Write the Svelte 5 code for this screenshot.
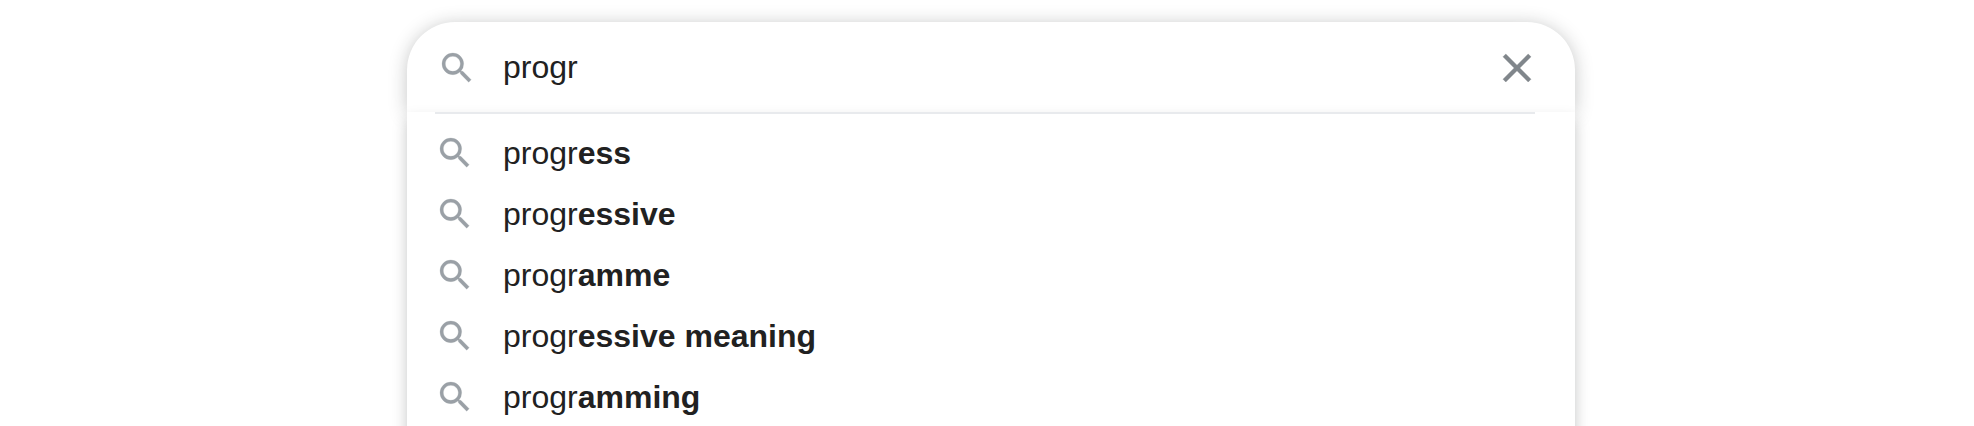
<script>
  let query = $state('progr');
  const endings = ['ess', 'essive', 'amme', 'essive meaning', 'amming'];
</script>

{#snippet glass()}
  <svg class="glass" viewBox="0 0 24 24" aria-hidden="true">
    <path d="M15.5 14h-.79l-.28-.27A6.471 6.471 0 0 0 16 9.5 6.5 6.5 0 1 0 9.5 16c1.61 0 3.09-.59 4.23-1.57l.27.28v.79l5 4.99L20.49 19l-4.99-5zm-6 0C7.01 14 5 11.99 5 9.5S7.01 5 9.5 5 14 7.01 14 9.5 11.99 14 9.5 14z" />
  </svg>
{/snippet}

<div class="page">
  <div class="search">
    <div class="bar">
      {@render glass()}
      <span class="query">{query}</span>
      <svg class="clear" viewBox="0 0 24 24" aria-hidden="true">
        <path d="M19 6.41L17.59 5 12 10.59 6.41 5 5 6.41 10.59 12 5 17.59 6.41 19 12 13.41 17.59 19 19 17.59 13.41 12z" />
      </svg>
    </div>
    <div class="panel">
      <div class="divider"></div>
      <ul>
        {#each endings as ending}
          <li>{@render glass()}<span>progr<b>{ending}</b></span></li>
        {/each}
      </ul>
    </div>
  </div>
</div>

<style>
  :global(body) {
    background: #fff;
  }
  .page {
    height: 426px;
    padding-top: 22px;
    box-sizing: border-box;
    overflow: hidden;
    font: 32px/36px "Liberation Sans", Arial, sans-serif;
    color: #212121;
  }
  .search {
    width: 1168px;
    margin-left: 407px;
  }
  .bar {
    display: flex;
    align-items: center;
    height: 90px;
    box-sizing: border-box;
    padding: 0 34px 0 30px;
    border-radius: 48px 48px 0 0;
    background: #fff;
    box-shadow: 0 2px 18px rgba(32, 33, 36, 0.26);
  }
  .glass {
    width: 40px;
    height: 40px;
    flex: none;
    fill: #9aa0a6;
    stroke: #9aa0a6;
    stroke-width: 0.15;
  }
  .bar .glass {
    margin-top: 1px;
  }
  .query {
    flex: 1;
    margin-left: 26px;
  }
  .clear {
    width: 48px;
    height: 48px;
    margin-top: 2px;
    fill: #80868b;
    stroke: #80868b;
    stroke-width: 0.2;
  }
  .panel {
    height: 370px;
    background: #fff;
    box-shadow: 0 8px 13px rgba(32, 33, 36, 0.26);
  }
  .divider {
    height: 2px;
    margin: 0 40px 0 28px;
    background: #e8eaed;
  }
  ul {
    list-style: none;
    margin: 0;
    padding: 8px 0 0 28px;
  }
  li {
    display: flex;
    align-items: center;
    gap: 28px;
    height: 61px;
  }
</style>
